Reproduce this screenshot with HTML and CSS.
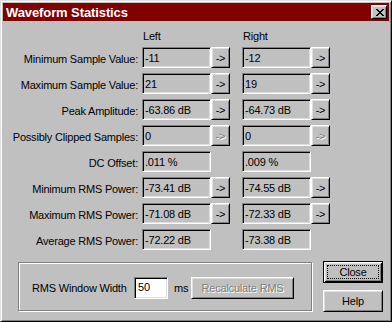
FILE: index.html
```html
<!DOCTYPE html>
<html lang="en">
<head>
  <meta charset="UTF-8">
  <title>Waveform Statistics</title>
  <link rel="stylesheet" href="styles.css">
</head>
<body>
  <div class="window">
    <div class="title-bar">
      <span class="title-text">Waveform Statistics</span>
      <button class="title-close" aria-label="Close">
        <svg width="8" height="7" viewBox="0 0 8 7" shape-rendering="crispEdges">
          <path d="M0 0h2v1h-2z M6 0h2v1h-2z M1 1h2v1h-2z M5 1h2v1h-2z M2 2h4v1h-4z M3 3h2v1h-2z M2 4h4v1h-4z M1 5h2v1h-2z M5 5h2v1h-2z M0 6h2v1h-2z M6 6h2v1h-2z" fill="#000"/>
        </svg>
      </button>
    </div>

    <div class="stats">
      <div></div>
      <div class="col-head">Left</div>
      <div></div>
      <div></div>
      <div class="col-head">Right</div>
      <div></div>

      <div class="label">Minimum Sample Value:</div>
      <div class="field">-11</div>
      <button class="btn arrow">-&gt;</button>
      <div></div>
      <div class="field">-12</div>
      <button class="btn arrow">-&gt;</button>

      <div class="label">Maximum Sample Value:</div>
      <div class="field">21</div>
      <button class="btn arrow">-&gt;</button>
      <div></div>
      <div class="field">19</div>
      <button class="btn arrow">-&gt;</button>

      <div class="label">Peak Amplitude:</div>
      <div class="field">-63.86 dB</div>
      <button class="btn arrow">-&gt;</button>
      <div></div>
      <div class="field">-64.73 dB</div>
      <button class="btn arrow">-&gt;</button>

      <div class="label">Possibly Clipped Samples:</div>
      <div class="field">0</div>
      <button class="btn arrow disabled">-&gt;</button>
      <div></div>
      <div class="field">0</div>
      <button class="btn arrow disabled">-&gt;</button>

      <div class="label">DC Offset:</div>
      <div class="field">.011 %</div>
      <div></div>
      <div></div>
      <div class="field">.009 %</div>
      <div></div>

      <div class="label">Minimum RMS Power:</div>
      <div class="field">-73.41 dB</div>
      <button class="btn arrow">-&gt;</button>
      <div></div>
      <div class="field">-74.55 dB</div>
      <button class="btn arrow">-&gt;</button>

      <div class="label">Maximum RMS Power:</div>
      <div class="field">-71.08 dB</div>
      <button class="btn arrow">-&gt;</button>
      <div></div>
      <div class="field">-72.33 dB</div>
      <button class="btn arrow">-&gt;</button>

      <div class="label">Average RMS Power:</div>
      <div class="field">-72.22 dB</div>
      <div></div>
      <div></div>
      <div class="field">-73.38 dB</div>
      <div></div>
    </div>

    <div class="bottom">
      <div class="group">
        <span class="group-label">RMS Window Width</span>
        <input class="edit" type="text" value="50">
        <span class="unit">ms</span>
        <button class="btn recalc disabled">Recalculate RMS</button>
      </div>
      <div class="side-buttons">
        <button class="btn default"><span class="focus">Close</span></button>
        <button class="btn side">Help</button>
      </div>
    </div>
  </div>
</body>
</html>
```

FILE: styles.css
```css
body {
  margin: 0;
  background-color: #c0c0c0;
  font-family: 'Liberation Sans', Arial, sans-serif;
  font-size: 11px;
  letter-spacing: -0.2px;
  color: #000;
}
.window {
  width: 392px;
  height: 322px;
  box-sizing: border-box;
  border: 1px solid;
  border-color: #dfdfdf #000 #000 #dfdfdf;
  box-shadow: inset 1px 1px #fff, inset -1px -1px #808080;
  padding: 2px;
  background-color: #c0c0c0;
}
.title-bar {
  height: 18px;
  background-color: #800000;
  display: flex;
  align-items: center;
  justify-content: space-between;
  padding: 0 2px 0 3px;
}
.title-text {
  color: #fff;
  font-weight: bold;
  font-size: 13px;
  letter-spacing: -0.1px;
}
.title-close {
  width: 16px;
  height: 14px;
  padding: 0 0 0 1px;
  box-sizing: border-box;
  background-color: #c0c0c0;
  border: 1px solid;
  border-color: #fff #000 #000 #fff;
  box-shadow: inset 1px 1px #dfdfdf, inset -1px -1px #808080;
  display: flex;
  align-items: center;
  justify-content: center;
}
.title-close svg {
  display: block;
}
.stats {
  display: grid;
  grid-template-columns: 139px 69px 19px 12px 69px 19px;
  grid-auto-rows: 21px;
  row-gap: 5px;
}
.col-head {
  padding: 9px 0 0 1px;
  line-height: 13px;
}
.label {
  text-align: right;
  padding: 5px 4px 0 0;
  line-height: 15px;
  white-space: nowrap;
}
.field {
  box-sizing: border-box;
  height: 21px;
  border: 1px solid;
  border-color: #808080 #fff #fff #808080;
  box-shadow: inset 1px 1px #000, inset -1px -1px #dfdfdf;
  padding: 3px 0 0 2px;
  line-height: 15px;
  white-space: nowrap;
  overflow: hidden;
}
.btn {
  font-family: inherit;
  font-size: 11px;
  letter-spacing: inherit;
  color: #000;
  background-color: #c0c0c0;
  box-sizing: border-box;
  border: 1px solid;
  border-color: #fff #000 #000 #fff;
  box-shadow: inset 1px 1px #dfdfdf, inset -1px -1px #808080;
  padding: 0;
  margin: 0;
}
.btn.disabled {
  color: #808080;
  text-shadow: 1px 1px #fff;
}
.arrow {
  height: 21px;
  width: 19px;
  line-height: 15px;
  padding-top: 2px;
}
.bottom {
  display: flex;
  align-items: flex-start;
  margin-top: 11px;
}
.group {
  margin: 1px 0 0 15px;
  width: 294px;
  height: 49px;
  box-sizing: border-box;
  border: 1px solid #808080;
  box-shadow: inset 1px 1px #fff, 1px 1px #fff;
  display: flex;
  align-items: flex-start;
  padding: 14px 0 0 13px;
}
.group-label {
  width: 102px;
  padding-top: 5px;
  line-height: 13px;
  white-space: nowrap;
}
.edit {
  width: 34px;
  height: 22px;
  box-sizing: border-box;
  margin: 0;
  border: 1px solid;
  border-color: #808080 #fff #fff #808080;
  box-shadow: inset 1px 1px #000, inset -1px -1px #dfdfdf;
  background-color: #fff;
  font-family: inherit;
  font-size: 11px;
  letter-spacing: inherit;
  padding: 0 0 3px 3px;
  line-height: 13px;
  outline: none;
}
.unit {
  width: 17px;
  margin-left: 6px;
  padding-top: 5px;
  line-height: 13px;
}
.recalc {
  width: 103px;
  height: 22px;
}
.side-buttons {
  margin-left: 11px;
  display: flex;
  flex-direction: column;
  gap: 7px;
}
.side {
  width: 60px;
  height: 22px;
}
.default {
  width: 60px;
  height: 22px;
  border: 1px solid #000;
  box-shadow: inset 1px 1px #fff, inset -1px -1px #000, inset 2px 2px #dfdfdf, inset -2px -2px #808080;
  padding: 3px;
}
.focus {
  display: block;
  height: 100%;
  box-sizing: border-box;
  border: 1px dotted #000;
  line-height: 12px;
}
```
